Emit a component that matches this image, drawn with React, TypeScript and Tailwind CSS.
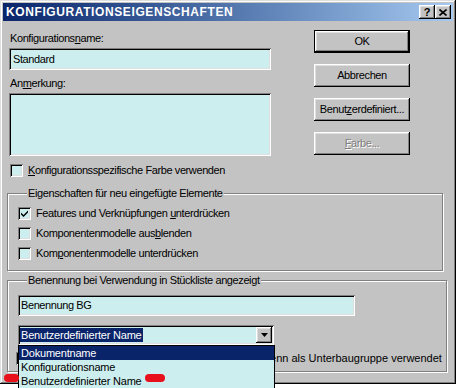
import React from 'react';

// classic win9x bevels
const raised =
  'bg-[#c3c3c3] shadow-[inset_-1px_-1px_0_#000,inset_1px_1px_0_#fff,inset_-2px_-2px_0_#808080,inset_2px_2px_0_#dfdfdf]';
const sunken =
  'bg-[#cceeee] shadow-[inset_1px_1px_0_#808080,inset_-1px_-1px_0_#fff,inset_2px_2px_0_#000,inset_-2px_-2px_0_#dfdfdf]';
const etched = 'border border-[#808080] shadow-[inset_1px_1px_0_#fff,1px_1px_0_#fff]';

const U: React.FC<{ children: React.ReactNode }> = ({ children }) => (
  <span className="underline underline-offset-[1px]">{children}</span>
);

const Checkbox: React.FC<{ checked?: boolean; className?: string }> = ({ checked, className = '' }) => (
  <span className={`w-[13px] h-[13px] shrink-0 flex items-center justify-center ${sunken} ${className}`}>
    {checked && (
      <svg width="7" height="7" viewBox="0 0 7 7">
        <polygon points="0,2.5 2.5,5 7,0.5 7,2.5 2.5,7 0,4.5" fill="#000" />
      </svg>
    )}
  </span>
);

const Button: React.FC<{ children: React.ReactNode; isDefault?: boolean; disabled?: boolean }> = ({
  children,
  isDefault,
  disabled,
}) => (
  <div
    className={`w-[96px] h-[23px] flex items-center justify-center ${raised} ${
      isDefault ? 'border border-black' : ''
    } ${disabled ? 'text-[#808080] [text-shadow:1px_1px_0_#fff]' : ''}`}
  >
    {children}
  </div>
);

const TitleButton: React.FC<{ children: React.ReactNode }> = ({ children }) => (
  <div className={`w-[16px] h-[14px] flex items-center justify-center ${raised}`}>{children}</div>
);

export default function App() {
  return (
    <div className="w-[460px] h-[388px] bg-white relative overflow-hidden font-['Liberation_Sans',Arial,sans-serif] text-[11px] leading-[13px] text-black tracking-[-0.4px]">
      <div className="w-[456px] h-[384px] bg-[#c3c3c3] p-[3px] shadow-[inset_-1px_-1px_0_#000,inset_1px_1px_0_#dfdfdf,inset_-2px_-2px_0_#808080,inset_2px_2px_0_#fff]">
        {/* Title bar */}
        <div className="h-[18px] flex items-center bg-linear-to-r from-[#0a246a] to-[#a6caf0] pl-[3px] pr-[2px]">
          <span className="text-white font-bold text-[12px] tracking-[0.6px]">KONFIGURATIONSEIGENSCHAFTEN</span>
          <div className="ml-auto flex">
            <TitleButton>
              <span className="font-bold text-[11px] leading-none tracking-normal">?</span>
            </TitleButton>
            <TitleButton>
              <svg width="8" height="7" viewBox="0 0 8 7">
                <path d="M0.5 0.5 L7.5 6.5 M7.5 0.5 L0.5 6.5" stroke="#000" strokeWidth="1.6" />
              </svg>
            </TitleButton>
          </div>
        </div>

        {/* Top section */}
        <div className="flex">
          <div className="ml-[6px] w-[262px] flex flex-col">
            <div className="mt-[11px] ml-[1px]">
              Konfigurations<U>n</U>ame:
            </div>
            <div className={`mt-[3px] h-[22px] flex items-center px-[4px] ${sunken}`}>Standard</div>
            <div className="mt-[7px] ml-[1px]">
              An<U>m</U>erkung:
            </div>
            <div className={`mt-[3px] h-[63px] ${sunken}`} />
            <div className="mt-[8px] ml-[1px] flex items-center gap-[5px]">
              <Checkbox />
              <span>
                <U>K</U>onfigurationsspezifische Farbe verwenden
              </span>
            </div>
          </div>

          <div className="ml-[43px] mt-[9px] flex flex-col gap-[11px]">
            <Button isDefault>OK</Button>
            <Button>Abbrechen</Button>
            <Button>
              Benut<U>z</U>erdefiniert...
            </Button>
            <Button disabled>
              <U>F</U>arbe...
            </Button>
          </div>
        </div>

        {/* Eigenschaften group */}
        <fieldset className={`mt-[10px] ml-[4px] w-[436px] pl-[10px] pt-[7px] pb-[10px] ${etched}`}>
          <legend className="ml-[9px] px-[1px] bg-[#c3c3c3]">Eigenschaften für neu eingefügte Elemente</legend>
          <div className="flex flex-col gap-[7px]">
            <div className="flex items-center gap-[5px]">
              <Checkbox checked />
              <span>
                Features und Verknüpfungen <U>u</U>nterdrücken
              </span>
            </div>
            <div className="flex items-center gap-[5px]">
              <Checkbox />
              <span>
                Komponentenmodelle aus<U>b</U>lenden
              </span>
            </div>
            <div className="flex items-center gap-[5px]">
              <Checkbox />
              <span>
                Kom<U>p</U>onentenmodelle unterdrücken
              </span>
            </div>
          </div>
        </fieldset>

        {/* Benennung group */}
        <fieldset className={`mt-[3px] ml-[4px] w-[436px] pl-[10px] pr-[4px] pt-[8px] pb-[6px] ${etched}`}>
          <legend className="ml-[9px] px-[1px] bg-[#c3c3c3]">Benennung bei Verwendung in Stückliste angezeigt</legend>
          <div className={`w-[337px] h-[21px] flex items-center px-[3px] ${sunken}`}>Benennung BG</div>
          <div className={`mt-[9px] w-[256px] h-[20px] flex items-center pl-[2px] pr-[2px] ${sunken}`}>
            <span className="h-[14px] px-[1px] flex items-center bg-[#0a246a] text-white tracking-[-0.2px]">
              Benutzerdefinierter Name
            </span>
            <div className={`ml-auto w-[16px] h-[16px] flex items-center justify-center ${raised}`}>
              <svg width="7" height="4" viewBox="0 0 7 4">
                <polygon points="0,0 7,0 3.5,4" fill="#000" />
              </svg>
            </div>
          </div>
          <div className="mt-[7px] ml-[-2px] flex items-center gap-[5px]">
            <Checkbox />
            <span className="flex-1 overflow-hidden whitespace-nowrap text-right tracking-normal">
              Untergeordnete Komponenten nicht anzeigen, wenn als Unterbaugruppe verwendet
            </span>
          </div>
        </fieldset>
      </div>

      {/* open dropdown list */}
      <div className="absolute left-[18px] top-[345px] w-[257px] h-[60px] border border-black bg-[#cceeee] tracking-[-0.2px]">
        <div className="h-[14px] leading-[14px] px-[2px] bg-[#0a246a] text-white">Dokumentname</div>
        <div className="h-[14px] leading-[14px] px-[2px]">Konfigurationsname</div>
        <div className="h-[14px] leading-[14px] px-[2px]">Benutzerdefinierter Name</div>
      </div>

      {/* red marker blobs */}
      <div className="absolute left-[4px] top-[374px] w-[15px] h-[8px] rounded-full bg-[#e8101a]" />
      <div className="absolute left-[145px] top-[374px] w-[20px] h-[8px] rounded-full bg-[#e8101a]" />
    </div>
  );
}
